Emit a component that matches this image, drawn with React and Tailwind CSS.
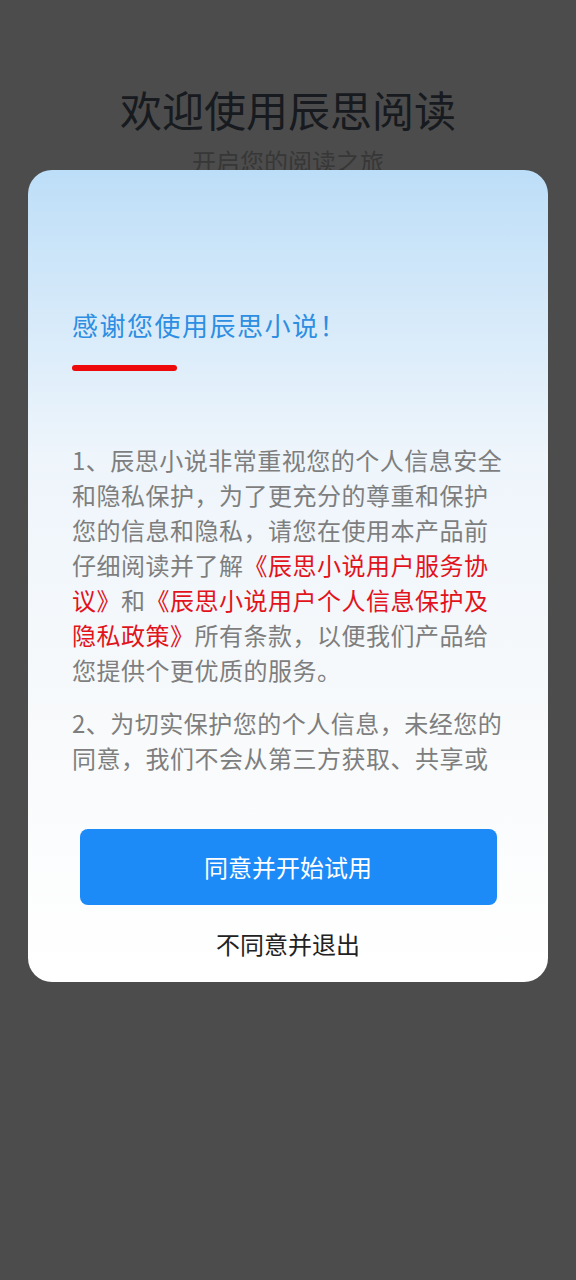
export default function App() {
  const font = { fontFamily: '"Noto Sans CJK SC", "Noto Sans", sans-serif' };
  return (
    <div className="relative w-full min-h-[1280px] bg-[#4c4c4c] overflow-hidden" style={font}>
      <div className="flex flex-col items-center pt-[84px]">
        <div className="text-[42px] leading-[50px] text-[#171a1e]">欢迎使用辰思阅读</div>
        <div className="mt-[12px] text-[24px] leading-[30px] text-[#373737]">开启您的阅读之旅</div>
      </div>

      <div className="absolute left-[28px] top-[170px] w-[520px] rounded-[24px] bg-[linear-gradient(180deg,#bddef8_0%,#eef5fb_35%,#f8fafb_70%,#ffffff_100%)]">
        <div className="flex flex-col pl-[44px] pr-[42px] pt-[137px]">
          <div className="text-[26px] leading-[36px] tracking-[1.5px] text-[#2d8ee2]">感谢您使用辰思小说！</div>
          <div className="mt-[22px] h-[6px] w-[105px] rounded-full bg-[#ee0a0a]"></div>
          <div className="mt-[71px] h-[336px] overflow-hidden text-[24px] leading-[35px] tracking-[0.5px] text-[#7e7e7e]">
            <p>
              1、辰思小说非常重视您的个人信息安全和隐私保护，为了更充分的尊重和保护您的信息和隐私，请您在使用本产品前仔细阅读并了解
              <span className="text-[#e2131b]">《辰思小说用户服务协议》</span>和
              <span className="text-[#e2131b]">《辰思小说用户个人信息保护及隐私政策》</span>
              所有条款，以便我们产品给您提供个更优质的服务。
            </p>
            <p className="mt-[18px]">
              2、为切实保护您的个人信息，未经您的同意，我们不会从第三方获取、共享或对外提供您的信息。
            </p>
          </div>
        </div>
        <div className="flex flex-col items-center pt-[51px] pb-[23px]">
          <button className="flex h-[76px] w-[417px] items-center justify-center rounded-[8px] bg-[#1c8bf8] text-[24px] leading-[30px] text-white">
            同意并开始试用
          </button>
          <button className="mt-[24px] text-[24px] leading-[30px] text-[#222222]">不同意并退出</button>
        </div>
      </div>
    </div>
  );
}
